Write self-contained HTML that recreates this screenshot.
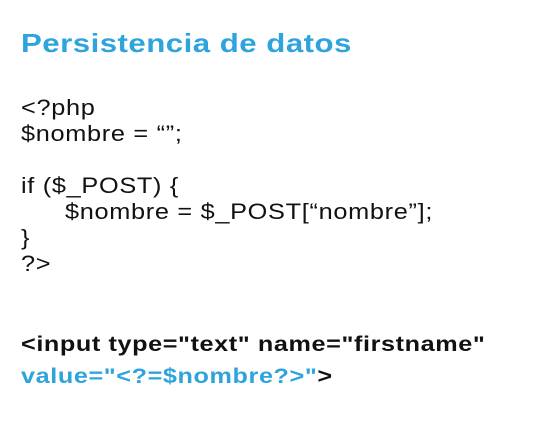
<!DOCTYPE html>
<html><head><style>
body{margin:0;width:540px;height:429px;background:#fff;font-family:"Liberation Sans",sans-serif;overflow:hidden;position:relative}
div{position:absolute;left:21px;white-space:nowrap;color:#111;font-size:22px;line-height:26px;letter-spacing:0.6px;transform:scaleX(1.15);transform-origin:0 0}
.t{color:#2ea3dd;font-weight:bold;font-size:26px;top:30px;letter-spacing:0.4px;transform:scaleX(1.2)}
.b{font-weight:bold;letter-spacing:0.5px;font-size:21px;transform:scaleX(1.2)}
.c{color:#2ea3dd}
</style></head><body>
<div class="t">Persistencia de datos</div>
<div style="top:95px">&lt;?php</div>
<div style="top:121px">$nombre = “”;</div>
<div style="top:173px">if ($_POST) {</div>
<div style="top:199px;left:65px">$nombre = $_POST[“nombre”];</div>
<div style="top:225px">}</div>
<div style="top:251px">?&gt;</div>
<div class="b" style="top:332px">&lt;input type="text" name="firstname"</div>
<div class="b" style="top:364px"><span class="c">value="&lt;?=$nombre?&gt;"</span>&gt;</div>
</body></html>
